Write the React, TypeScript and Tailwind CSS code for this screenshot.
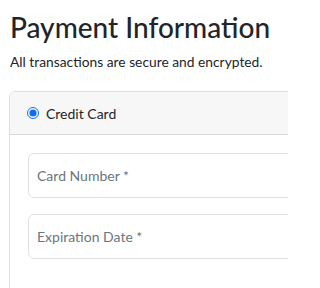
import React from "react";

export default function App() {
  return (
    <div
      className="w-[288px] h-[288px] overflow-hidden bg-white text-[#212529] pl-[9px]"
      style={{ fontFamily: 'Lato, "Open Sans", sans-serif' }}
    >
      <h1 className="text-[28px] leading-[34px] font-medium pt-[10px] pl-[1px] whitespace-nowrap">Payment Information</h1>
      <p className="text-[13.8px] leading-[21px] mt-[7px] pl-[1px] whitespace-nowrap">All transactions are secure and encrypted.</p>
      <div className="mt-[19px] w-[400px] border border-[rgba(0,0,0,0.125)] rounded-[6px]">
        <div className="bg-[#f7f7f7] border-b border-[rgba(0,0,0,0.125)] h-[43px] flex items-center pl-[17px] gap-[7px] rounded-t-[6px]">
          <input type="radio" defaultChecked className="w-[12px] h-[12px] m-0 accent-[#0d6efd]" />
          <span className="text-[14px]">Credit Card</span>
        </div>
        <div className="pl-[18px] pt-[18px] pb-[40px] flex flex-col gap-[16px]">
          <div className="h-[45px] border border-[#dee2e6] rounded-[6px] flex items-center pl-[8px] text-[14px] text-[#6c757d]">
            Card Number *
          </div>
          <div className="h-[45px] border border-[#dee2e6] rounded-[6px] flex items-center pl-[8px] text-[14px] text-[#6c757d]">
            Expiration Date *
          </div>
        </div>
      </div>
    </div>
  );
}
